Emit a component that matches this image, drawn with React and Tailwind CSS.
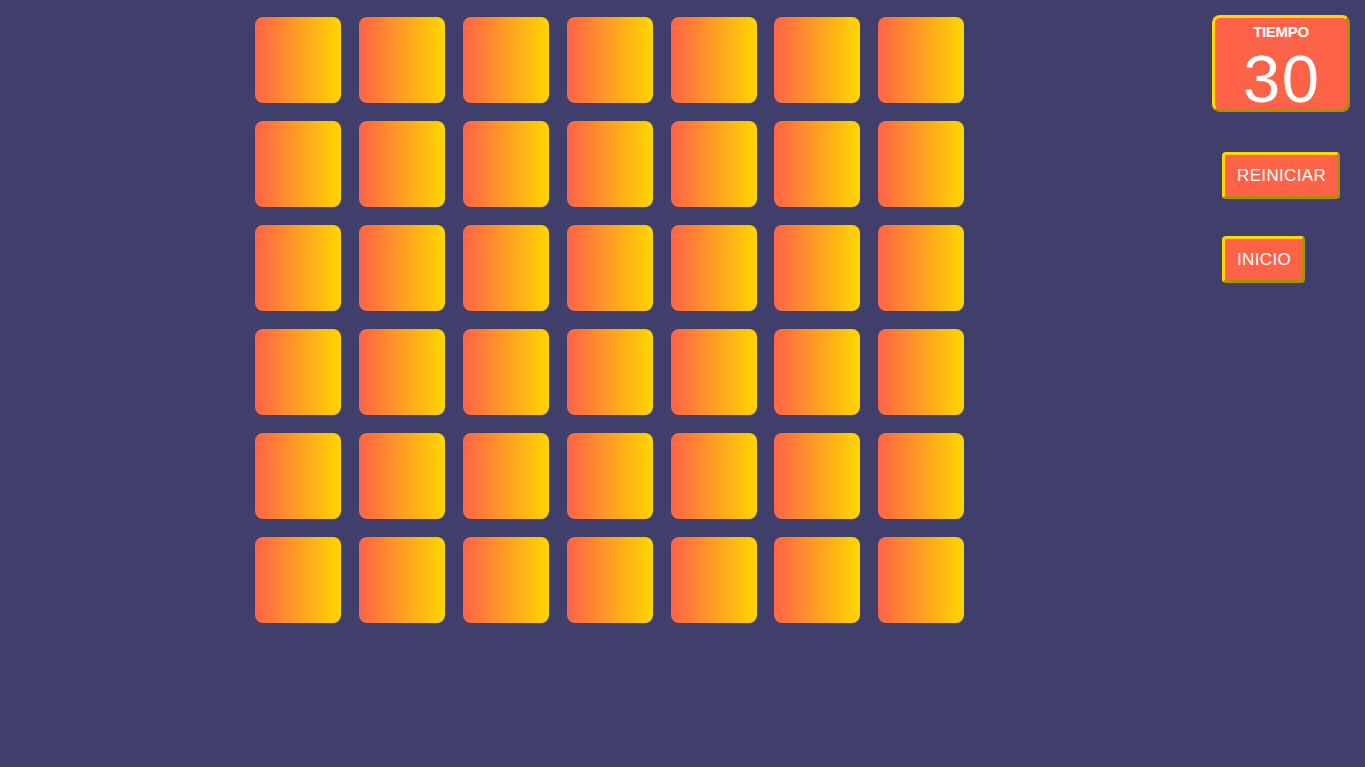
const cards = Array.from({ length: 42 }, (_, i) => i);

function Card() {
  return (
    <div className="w-[86px] h-[86px] rounded-[8px] bg-[linear-gradient(to_right,#ff6347,#ffd700)] cursor-pointer" />
  );
}

function Timer({ seconds }) {
  return (
    <div className="w-[138px] h-[97px] rounded-[8px] border-[3px] border-[#ffd700] [border-style:outset] bg-[#ff6347] text-white flex flex-col items-center">
      <div className="text-[15px] font-bold leading-none mt-[6px] tracking-[-0.3px]">TIEMPO</div>
      <div className="text-[67px] leading-none mt-[6px] tracking-[1.5px] pl-[1.5px]">{seconds}</div>
    </div>
  );
}

function Button({ children }) {
  return (
    <button className="h-[47px] pl-[12px] pr-[11px] rounded-[4px] border-[3px] border-[#ffd700] [border-style:outset] bg-[#ff6347] text-white text-[17px] tracking-[0.35px] leading-none">
      {children}
    </button>
  );
}

export default function App() {
  return (
    <div className="min-h-screen h-[767px] bg-[#403e6b] flex font-['Liberation_Sans',Arial,sans-serif]">
      <div className="pl-[255px] pt-[17px]">
        <div className="grid grid-cols-[repeat(7,86px)] gap-x-[17.9px] gap-y-[18px]">
          {cards.map((i) => (
            <Card key={i} />
          ))}
        </div>
      </div>
      <div className="ml-auto mr-[15px] pt-[15px] w-[138px] flex flex-col">
        <Timer seconds={30} />
        <div className="flex flex-col items-start gap-[37px] mt-[40px] pl-[10px]">
          <Button>REINICIAR</Button>
          <Button>INICIO</Button>
        </div>
      </div>
    </div>
  );
}
